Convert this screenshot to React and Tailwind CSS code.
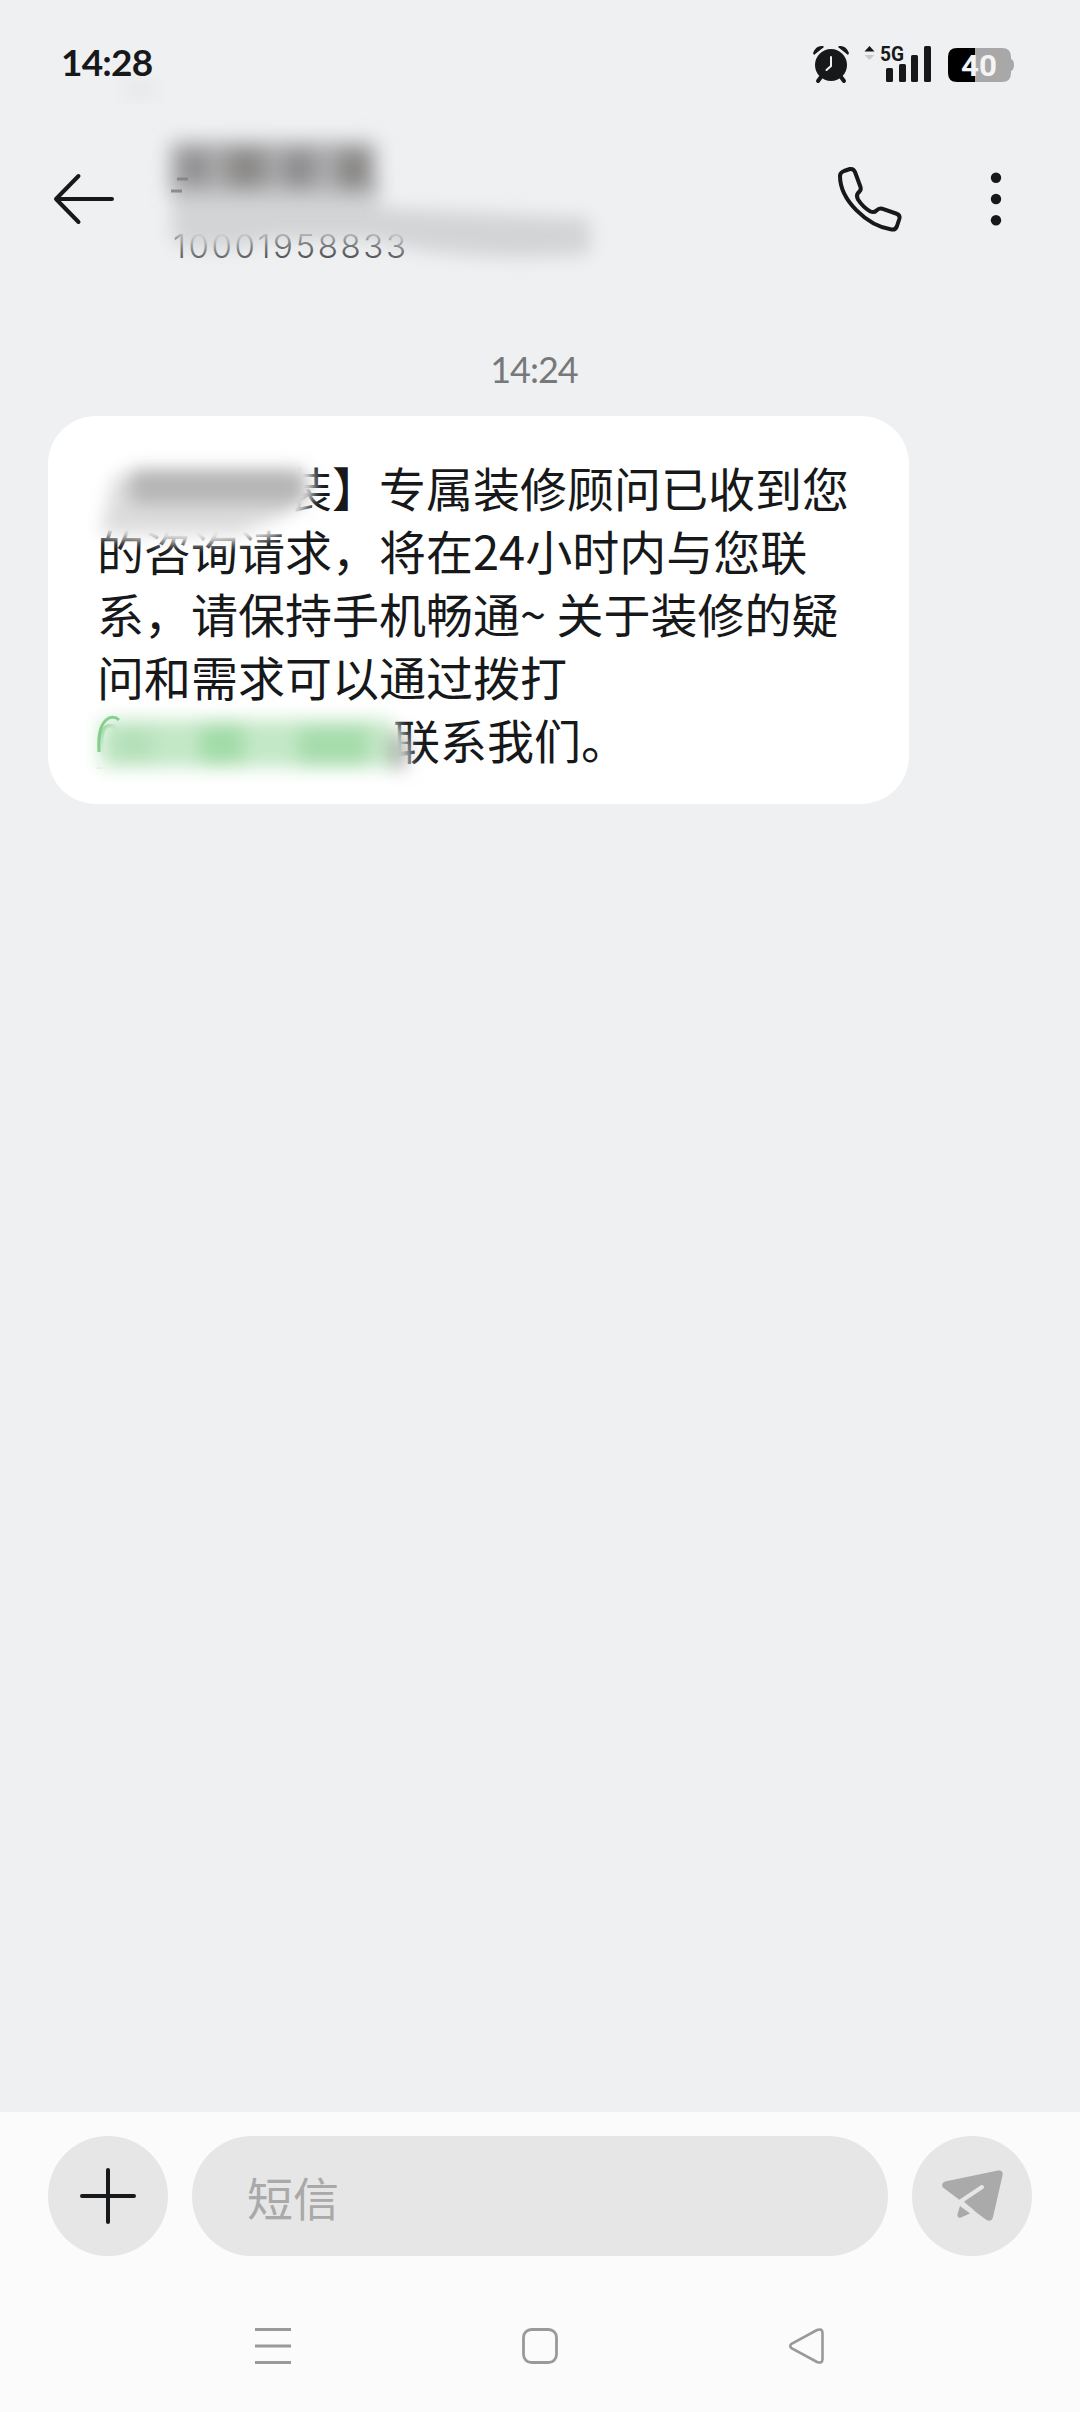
import React from "react";

const messageLines = [
  "的咨询请求，将在24小时内与您联",
  "系，请保持手机畅通~ 关于装修的疑",
  "问和需求可以通过拨打",
];

const StatusBar = () => (
  <div className="h-[110px] pl-[61px] pr-[65px] flex justify-between items-start text-[#17181a]">
    <p className="mt-[40px] font-['Lato',sans-serif] font-bold text-[37px] leading-[44px] tracking-[-0.8px]">
      14:28
    </p>
    <div className="mt-[44px] flex items-start">
      {/* Alarm */}
      <svg width="38" height="40" viewBox="0 0 38 40">
        <circle cx="19" cy="21" r="16" fill="currentColor" />
        <path d="M1 9 Q4 1 11 2 L12 3 L2 11Z M37 9 Q34 1 27 2 L26 3 L36 11Z" fill="currentColor" />
        <path d="M9 33 L6 37 M29 33 L32 37" stroke="currentColor" strokeWidth="4" strokeLinecap="round" />
        <path d="M19 13 V22 L14.5 26" stroke="#eff0f2" strokeWidth="2" fill="none" strokeLinecap="round" />
      </svg>
      {/* Signal */}
      <svg width="68" height="40" viewBox="0 0 68 40" className="ml-[14px]">
        <path d="M0.5 7.5 L5.5 2 L10.5 7.5Z" fill="currentColor" />
        <path d="M0.5 11 L5.5 16 L10.5 11Z" fill="#c9cacb" />
        <text x="16" y="17" fontSize="20" fontWeight="700" textLength="24" lengthAdjust="spacingAndGlyphs" fill="currentColor" fontFamily="Roboto, sans-serif">
          5G
        </text>
        <rect x="22" y="24" width="7" height="14" rx="1.5" fill="currentColor" />
        <rect x="35" y="20" width="7" height="18" rx="1.5" fill="currentColor" />
        <rect x="47" y="11" width="7" height="27" rx="1.5" fill="currentColor" />
        <rect x="60" y="2" width="7" height="36" rx="1.5" fill="currentColor" />
      </svg>
      {/* Battery */}
      <svg width="67" height="34" viewBox="0 0 67 34" className="ml-[16px] mt-[4px]">
        <path d="M27 0 H54 Q63 0 63 9 V11 Q66 12 66 17 Q66 22 63 23 V25 Q63 34 54 34 H27Z" fill="#a8a8a8" />
        <path d="M27 0 H9 Q0 0 0 9 V25 Q0 34 9 34 H27Z" fill="#000" />
        <text x="13" y="28" fontSize="30" fontWeight="700" textLength="36" lengthAdjust="spacingAndGlyphs" fill="#f4f4f4" fontFamily="Roboto, sans-serif">
          40
        </text>
      </svg>
    </div>
  </div>
);

const Header = () => (
  <div className="relative h-[180px] pl-[52px] pr-[78px] flex items-start text-[#17181a]">
    <svg width="64" height="54" viewBox="0 0 64 54" className="mt-[62px]">
      <path d="M60 27 H4 M26.5 4 L4 27 L26.5 50" stroke="currentColor" strokeWidth="4" fill="none" strokeLinecap="round" strokeLinejoin="round" />
    </svg>
    <p className="ml-[57px] mt-[118px] font-['Inter',sans-serif] font-light text-[33px] leading-[36px] tracking-[2.6px] text-[#55575a]">
      10001958833
    </p>
    <div className="ml-auto flex items-start">
      <svg width="68" height="68" viewBox="0 0 68 68" className="mt-[56px]">
        <path
          d="M8 5 L14 3 Q17.500 2.500 19 6 L24.500 21 Q25.300 23.500 23.500 25.500 L22 27 Q20 29.500 22 33.500 C25.500 39 30 43 34.500 45.500 Q38 47 40.500 44.500 Q43 42 46 42.700 L60 47.500 Q64.500 49 63.300 53 L61 60 Q59.500 64.200 55.500 63.500 C31 60 4 34 4 10 Q4 6.500 8 5Z"
          stroke="currentColor"
          strokeWidth="4"
          fill="none"
          strokeLinejoin="round"
        />
      </svg>
      <svg width="12" height="56" viewBox="0 0 12 56" className="ml-[86px] mt-[61px]">
        <circle cx="6" cy="6.700" r="5.200" fill="currentColor" />
        <circle cx="6" cy="28" r="5.200" fill="currentColor" />
        <circle cx="6" cy="49.300" r="5.200" fill="currentColor" />
      </svg>
    </div>

    {/* Blurred contact name and number */}
    <svg width="600" height="220" viewBox="60 70 600 220" className="absolute left-[60px] top-[-40px]">
      <defs>
        <filter id="soft" x="-30%" y="-60%" width="160%" height="220%">
          <feGaussianBlur stdDeviation="10" />
        </filter>
        <filter id="softer" x="-30%" y="-60%" width="160%" height="220%">
          <feGaussianBlur stdDeviation="9" />
        </filter>
      </defs>
      <ellipse cx="140" cy="90" rx="16" ry="6" fill="#dfe0e2" filter="url(#soft)" />
      <g filter="url(#softer)">
        <path d="M172 182 H380 V208 L590 218 V254 Q500 262 420 250 L372 240 H270 Q220 254 182 246 L172 240Z" fill="#d3d4d6" />
      </g>
      <g filter="url(#soft)">
        <rect x="170" y="142" width="206" height="51" rx="6" fill="#acacae" />
        <rect x="180" y="150" width="28" height="36" fill="#909092" />
        <rect x="226" y="148" width="40" height="40" fill="#8c8a88" />
        <rect x="284" y="150" width="30" height="38" fill="#8c8c90" />
        <rect x="338" y="150" width="32" height="40" fill="#888785" />
      </g>
      <path d="M177 179 H188 M171 191 H182" stroke="#7d7e80" strokeWidth="3" opacity="0.8" />
    </svg>
  </div>
);

const Bubble = () => (
  <div className="relative ml-[48px] w-[861px] h-[388px] rounded-[48px] bg-white pl-[49px] pt-[39px] font-['Noto_Sans_CJK_SC',sans-serif] text-[47px] leading-[63px] text-[#17181a] whitespace-pre">
    <p className="pl-[188px]">装】专属装修顾问已收到您</p>
    {messageLines.map((line) => (
      <p key={line}>{line}</p>
    ))}
    <p className="flex">
      <span className="w-[296px] text-[#45b556] underline decoration-2 underline-offset-8">0</span>
      <span>联系我们。</span>
    </p>

    {/* Smudges over the company name and the phone number */}
    <svg width="440" height="410" viewBox="0 0 440 410" className="absolute left-0 top-0">
      <defs>
        <filter id="smudge" x="-30%" y="-60%" width="160%" height="220%">
          <feGaussianBlur stdDeviation="9" />
        </filter>
        <filter id="edge" x="-30%" y="-60%" width="160%" height="220%">
          <feGaussianBlur stdDeviation="6" />
        </filter>
      </defs>
      <path d="M50 30 H240 Q268 40 264 78 Q250 110 222 121 Q150 134 46 116Z" fill="#fff" filter="url(#edge)" />
      <path d="M66 60 H248 L244 96 L190 118 H52Z" fill="#dcdcdc" filter="url(#smudge)" />
      <rect x="82" y="54" width="176" height="34" rx="8" fill="#b5b5b5" filter="url(#smudge)" />
      <path d="M62 306 H345 Q362 330 360 352 L352 364 H44 V340Z" fill="#fff" filter="url(#edge)" />
      <g filter="url(#smudge)">
        <rect x="52" y="304" width="292" height="47" fill="#c3e8c6" />
        <rect x="66" y="312" width="40" height="34" fill="#b4e0b8" />
        <rect x="152" y="308" width="44" height="40" fill="#a2dba8" />
        <rect x="250" y="310" width="70" height="40" fill="#a6dcac" />
        <rect x="342" y="318" width="16" height="34" fill="#a9aaa9" />
      </g>
      <path d="M51 336 Q49 308 61 302 Q67 300 71 304" stroke="#6fc47c" strokeWidth="3" fill="none" opacity="0.8" />
    </svg>
  </div>
);

const InputBar = () => (
  <div className="pt-[24px] px-[48px] flex gap-6">
    <button className="w-[120px] h-[120px] rounded-full bg-[#e6e6e6] flex items-center justify-center">
      <svg width="60" height="60" viewBox="0 0 60 60">
        <path d="M30 4 V56 M4 30 H56" stroke="#17181a" strokeWidth="4" strokeLinecap="round" />
      </svg>
    </button>
    <div className="flex-1 h-[120px] rounded-full bg-[#e6e6e6] pl-[55px] flex items-center font-['Noto_Sans_CJK_SC',sans-serif] text-[46px] text-[#a9a9a9]">
      短信
    </div>
    <button className="w-[120px] h-[120px] rounded-full bg-[#e6e6e6] flex items-center justify-center">
      <svg width="66" height="60" viewBox="0 0 66 60">
        <path
          d="M6 15.500 L59 4.500 Q64.500 4 63.500 9.500 L54 51 Q52.500 56.500 47.500 54 L22 35 L4 21.500 Q1.500 17.500 6 15.500Z"
          fill="#aaa"
        />
        <path d="M43 21 L21.500 35.500 L34 46" stroke="#e6e6e6" strokeWidth="4" fill="none" strokeLinecap="round" />
        <path d="M21 40 L31 47.500 L22 51.500 Q18 52.500 18.500 48Z" fill="#aaa" />
      </svg>
    </button>
  </div>
);

const NavBar = () => (
  <div className="mt-[70px] pl-[254px] pr-[254px] flex justify-between">
    <svg width="38" height="40" viewBox="0 0 38 40">
      <path d="M1 3.500 H37 M1 20 H37 M1 36.500 H37" stroke="#999" strokeWidth="3" />
    </svg>
    <svg width="38" height="40" viewBox="0 0 38 40">
      <rect x="2.500" y="3.500" width="33" height="33" rx="8" stroke="#999" strokeWidth="2.800" fill="none" />
    </svg>
    <svg width="38" height="40" viewBox="0 0 38 40">
      <path
        d="M3.500 17.800 L29 4 Q34.500 2 34.500 7 V33 Q34.500 38 29 36 L3.500 22.200 Q1 20 3.500 17.800Z"
        stroke="#999"
        strokeWidth="2.600"
        fill="none"
      />
    </svg>
  </div>
);

const App = () => {
  return (
    <div className="w-[1080px] h-[2412px] bg-[#eff0f2] flex flex-col overflow-hidden">
      <StatusBar />
      <Header />
      <div className="flex-1">
        <p className="pt-[57px] h-[126px] pr-[12px] text-center font-['Lato',sans-serif] text-[36px] leading-[44px] tracking-[-1px] text-[#77787a]">
          14:24
        </p>
        <Bubble />
      </div>
      <div className="h-[300px] bg-[#fbfbfb]">
        <InputBar />
        <NavBar />
      </div>
    </div>
  );
};

export default App;
